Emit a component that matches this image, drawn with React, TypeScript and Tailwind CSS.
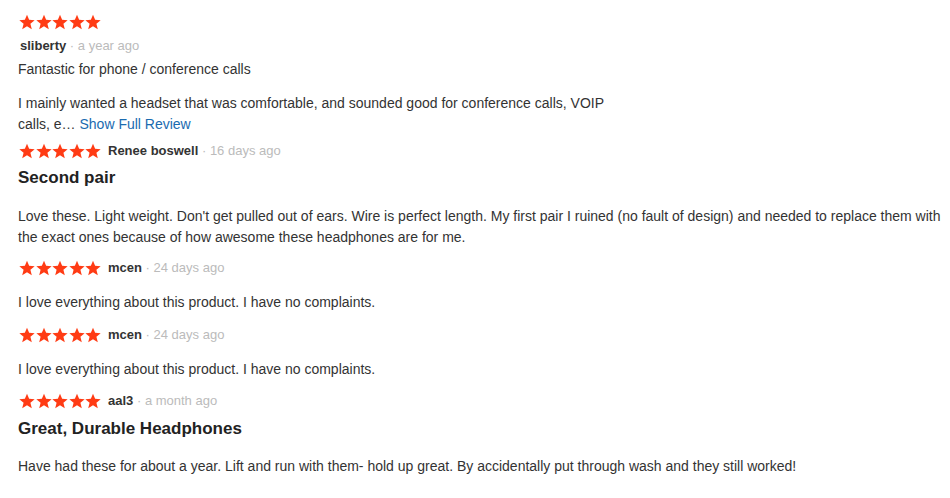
import React from "react";

const Star = () => (
  <svg width="16" height="16" viewBox="0 0 24 24" className="block">
    <path
      d="M12 1l3.2 7.7 8.3.6-6.4 5.4 2.1 8.2L12 18.4l-7.2 4.5 2.1-8.2L.5 9.3l8.3-.6z"
      fill="#ff3b14"
    />
  </svg>
);

const Stars = () => (
  <div className="flex ml-px gap-[0.5px]">
    <Star />
    <Star />
    <Star />
    <Star />
    <Star />
  </div>
);

const Meta = ({ name, date }: { name: string; date: string }) => (
  <div className="text-[13px] leading-[18px]">
    <span className="font-bold text-[#333]">{name}</span>
    <span className="text-[#bbb]"> · {date}</span>
  </div>
);

const Header = ({ name, date }: { name: string; date: string }) => (
  <div className="flex items-center h-[24px] gap-[7px]">
    <Stars />
    <Meta name={name} date={date} />
  </div>
);

export default function App() {
  return (
    <div
      className="bg-white w-[950px] h-[498px] overflow-hidden pl-[18px] pr-[8px] text-[#333]"
      style={{ fontFamily: '"Liberation Sans", Arial, sans-serif' }}
    >
      {/* Review 1 */}
      <div className="pt-[14px]">
        <Stars />
        <div className="mt-[7px] ml-[2px]">
          <Meta name="sliberty" date="a year ago" />
        </div>
        <div className="mt-[4px] text-[14px] leading-[21px]">
          Fantastic for phone / conference calls
        </div>
        <p className="mt-[13px] w-[600px] text-[14px] leading-[21px]">
          I mainly wanted a headset that was comfortable, and sounded good for
          conference calls, VOIP calls, e…{" "}
          <span className="text-[#1a6bb0]">Show Full Review</span>
        </p>
      </div>

      {/* Review 2 */}
      <div className="mt-[4px]">
        <Header name="Renee boswell" date="16 days ago" />
        <div className="mt-[3px] text-[17px] leading-[24px] font-bold text-[#222]">
          Second pair
        </div>
        <p className="mt-[16px] text-[14px] leading-[21px]">
          Love these. Light weight. Don't get pulled out of ears. Wire is
          perfect length. My first pair I ruined (no fault of design) and needed
          to replace them with the exact ones because of how awesome these
          headphones are for me.
        </p>
      </div>

      {/* Review 3 */}
      <div className="mt-[8px]">
        <Header name="mcen" date="24 days ago" />
        <p className="mt-[12px] text-[14px] leading-[21px]">
          I love everything about this product. I have no complaints.
        </p>
      </div>

      {/* Review 4 */}
      <div className="mt-[10px]">
        <Header name="mcen" date="24 days ago" />
        <p className="mt-[12px] text-[14px] leading-[21px]">
          I love everything about this product. I have no complaints.
        </p>
      </div>

      {/* Review 5 */}
      <div className="mt-[9px]">
        <Header name="aal3" date="a month ago" />
        <div className="mt-[4px] text-[17px] leading-[24px] font-bold text-[#222]">
          Great, Durable Headphones
        </div>
        <p className="mt-[15px] text-[14px] leading-[21px]">
          Have had these for about a year. Lift and run with them- hold up
          great. By accidentally put through wash and they still worked!
        </p>
      </div>
    </div>
  );
}
